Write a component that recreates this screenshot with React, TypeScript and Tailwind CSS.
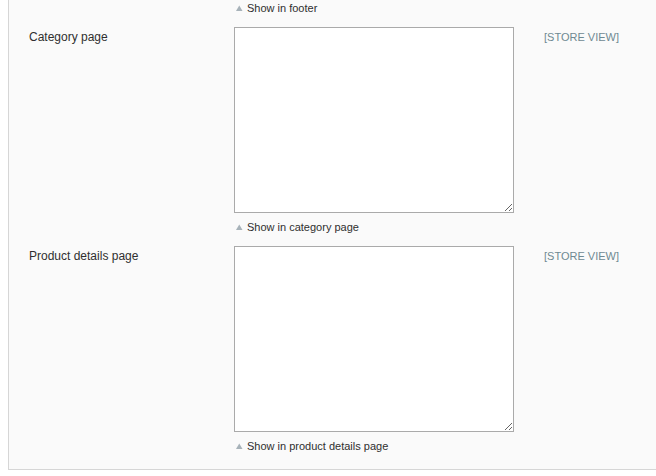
const Note = ({ text }: { text: string }) => (
  <div className="flex items-center h-[14px] text-[11px] leading-[14px] text-[#2f2f2f]">
    <svg width="13" height="14" viewBox="0 0 13 14" className="shrink-0">
      <polygon points="2,10 8.5,10 5.25,4.5" fill="#a7b2b9" />
    </svg>
    <span>{text}</span>
  </div>
);

const Row = ({ label, note }: { label: string; note: string }) => (
  <div className="flex mt-[12px]">
    <div className="w-[225px] pl-[20px] pt-[3px] text-[12px] leading-[14px] text-[#2f2f2f] shrink-0">
      {label}
    </div>
    <div className="w-[280px] shrink-0">
      <textarea className="block w-[280px] h-[186px] border border-[#aaaaaa] bg-white resize-y outline-none" />
      <div className="mt-[7px]">
        <Note text={note} />
      </div>
    </div>
    <div className="pl-[30px] pt-[3px] text-[11px] leading-[14px] text-[#6f8992] whitespace-nowrap">
      [STORE VIEW]
    </div>
  </div>
);

export default function App() {
  return (
    <div
      className="w-[656px] h-[476px] bg-white overflow-hidden"
      style={{ fontFamily: '"Liberation Sans", Arial, sans-serif' }}
    >
      <div className="ml-[8px] w-[700px] bg-[#fafafa] border-l border-b border-[#d6d6d6] pt-[1px] pb-[16px]">
        <div className="pl-[225px]">
          <Note text="Show in footer" />
        </div>
        <Row label="Category page" note="Show in category page" />
        <Row label="Product details page" note="Show in product details page" />
      </div>
    </div>
  );
}
